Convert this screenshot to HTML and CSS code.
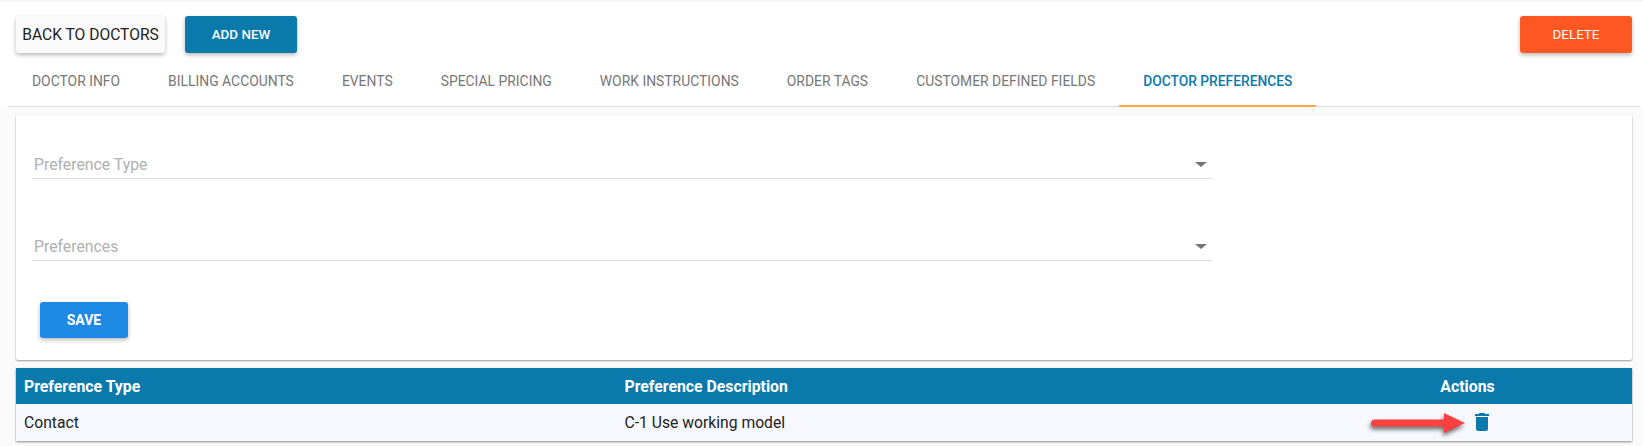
FILE: index.html
```html
<!DOCTYPE html>
<html lang="en">
<head>
<meta charset="utf-8">
<title>Doctor Preferences</title>
<link rel="stylesheet" href="styles.css">
</head>
<body>
<header class="top">
  <div class="toolbar">
    <button class="btn btn-light">BACK TO DOCTORS</button>
    <button class="btn btn-teal">ADD NEW</button>
    <button class="btn btn-orange">DELETE</button>
  </div>
  <nav class="tabs">
    <a class="tab">DOCTOR INFO</a>
    <a class="tab">BILLING ACCOUNTS</a>
    <a class="tab">EVENTS</a>
    <a class="tab">SPECIAL PRICING</a>
    <a class="tab">WORK INSTRUCTIONS</a>
    <a class="tab">ORDER TAGS</a>
    <a class="tab">CUSTOMER DEFINED FIELDS</a>
    <a class="tab active">DOCTOR PREFERENCES</a>
  </nav>
</header>
<main class="page">
  <section class="card">
    <div class="field"><span>Preference Type</span><i class="caret"></i></div>
    <div class="field second"><span>Preferences</span><i class="caret"></i></div>
    <button class="btn btn-save">SAVE</button>
  </section>
  <section class="table">
    <div class="row head">
      <div class="c1">Preference Type</div>
      <div class="c2">Preference Description</div>
      <div class="c3">Actions</div>
    </div>
    <div class="row body">
      <div class="c1">Contact</div>
      <div class="c2">C-1 Use working model</div>
      <div class="c3 icon-cell">
        <svg class="trash" viewBox="5 3 14 18" width="14" height="18"><path fill="#0a7aad" d="M6 19c0 1.100.9 2 2 2h8c1.100 0 2-.9 2-2V7H6v12zM19 4h-3.500l-1-1h-5l-1 1H5v2h14V4z"/></svg>
        <svg class="arrow" viewBox="0 0 94 24" width="94" height="24"><path fill="#fb4040" d="M3.500 8.500H73V2l21 10-21 10v-6.500H3.500a3.500 3.500 0 0 1 0-7z"/></svg>
      </div>
    </div>
  </section>
</main>
</body>
</html>
```

FILE: styles.css
```css
* { box-sizing: border-box; }
html, body { margin: 0; padding: 0; }
body {
  width: 1643px;
  height: 446px;
  background: #fafafa;
  font-family: Roboto, "Liberation Sans", sans-serif;
  overflow: hidden;
}
.top {
  background: linear-gradient(#f3f3f3 0, #fff 3px);
}
.toolbar {
  display: flex;
  align-items: center;
  height: 70px;
  padding: 16px 11px 17px 16px;
}
.btn {
  border: 0;
  border-radius: 3px;
  height: 37px;
  font-family: Roboto, "Liberation Sans", sans-serif;
  font-size: 13.4px;
  font-weight: 500;
  box-shadow: 0 2px 4px rgba(0,0,0,.28);
  padding: 0;
}
.btn-light { width: 149px; background: #fafafa; color: #222; font-weight: 400; font-size: 15.6px; }
.btn-teal { width: 112px; margin-left: 20px; background: #0a7aad; color: #fff; }
.btn-orange { width: 112px; margin-left: auto; background: #ff5722; color: #fff; font-weight: 400; }
.tabs {
  display: flex;
  height: 37px;
  margin-left: 8px;
  width: 1632px;
  border-bottom: 1px solid #ddd;
}
.tab {
  display: block;
  padding: 0 24px;
  font-size: 13.9px;
  line-height: 22px;
  color: #777;
  height: 37px;
}
.tab.active {
  color: #0a7aad;
  font-size: 13.8px;
  font-weight: 500;
  border-bottom: 2px solid #ffa63d;
}
.page {
  margin-left: 8px;
  width: 1632px;
}
.card {
  margin: 8px 0 0 8px;
  width: 1616px;
  height: 245px;
  background: #fff;
  border-radius: 2px;
  box-shadow: 0 1px 2px rgba(0,0,0,.4);
  padding: 37px 16px 0;
}
.field {
  display: flex;
  align-items: center;
  justify-content: space-between;
  width: 1180px;
  height: 27px;
  border-bottom: 1px solid #ddd;
  color: #b0b0b0;
  font-size: 15.8px;
  padding: 0 5px 0 2px;
}
.field span { padding-bottom: 2px; }
.second { margin-top: 55px; }
.caret {
  width: 0;
  height: 0;
  border-left: 6px solid transparent;
  border-right: 6px solid transparent;
  border-top: 5px solid #757575;
  margin-top: -2px;
}
.btn-save {
  display: block;
  height: 36px;
  margin: 41px 0 0 8px;
  width: 88px;
  background: #1e88e5;
  color: #fff;
  font-size: 14px;
  font-weight: 700;
}
.table {
  margin: 8px 0 0 8px;
  width: 1616px;
  box-shadow: 0 1px 2px rgba(0,0,0,.45);
}
.row { display: flex; align-items: center; padding-left: 8px; }
.head { height: 36px; background: #0a7aad; color: #fff; font-size: 15.8px; font-weight: 700; }
.body { height: 37px; background: #f7f8fe; color: #222; font-size: 15.7px; }
.c1 { width: 600.500px; }
.c2 { width: 800px; }
.c3 { width: 80px; text-align: center; position: relative; margin-left: 3px; }
.icon-cell { height: 37px; margin-left: 16px; }
.trash { position: absolute; left: 34px; top: 9px; }
.arrow { position: absolute; left: -69.500px; top: 7px; filter: drop-shadow(-1px 3px 2px rgba(0,0,0,.55)); }
```
